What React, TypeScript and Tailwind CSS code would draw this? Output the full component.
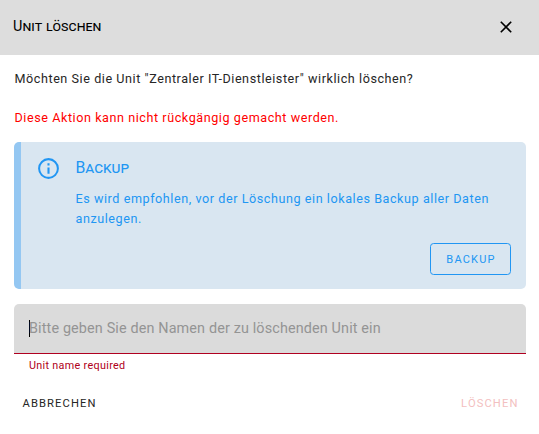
export default function App() {
  return (
    <div className="h-[434px] w-[539px] overflow-hidden bg-white font-[Roboto,sans-serif] text-[12.6px] leading-5 text-[#262626]">
      <header className="flex h-[55px] items-center justify-between bg-[#dddddd] pr-[26px] pb-px pl-[13px]">
        <h1 className="text-[14.4px] font-normal tracking-[0.06px] text-black [font-variant:small-caps]">Unit löschen</h1>
        <button aria-label="Schließen">
          <svg width="14" height="14" viewBox="0 0 14 14" fill="none" stroke="#000" strokeWidth="1.6"><path d="M1.8 1.8l10.4 10.4M12.2 1.8L1.8 12.2" /></svg>
        </button>
      </header>
      <main className="pt-[14px] pr-[13px] pl-[14px]">
        <p className="pl-[0.5px] tracking-[0.56px]">Möchten Sie die Unit "Zentraler IT-Dienstleister" wirklich löschen?</p>
        <p className="mt-[19px] pl-[0.5px] tracking-[0.56px] text-[#ff0000]">Diese Aktion kann nicht rückgängig gemacht werden.</p>
        <section className="mt-[14px] flex h-[147px] rounded-[5px] border-l-[7px] border-[#94c7f2] bg-[#d9e6f1] text-[#2196f3]">
          <svg className="mt-[14px] ml-[15px] shrink-0" width="25" height="25" viewBox="0 0 24 24" fill="currentColor"><path d="M11 9h2V7h-2m1 13c-4.41 0-8-3.59-8-8s3.59-8 8-8 8 3.59 8 8-3.59 8-8 8m0-18A10 10 0 0 0 2 12a10 10 0 0 0 10 10 10 10 0 0 0 10-10A10 10 0 0 0 12 2m-1 15h2v-6h-2v6z" /></svg>
          <div className="flex grow flex-col pt-[15px] pr-[15px] pl-[14px]">
            <h2 className="pl-[0.5px] text-[15.8px] leading-[22px] font-normal [font-variant:small-caps]">Backup</h2>
            <p className="mt-[10px] pl-[0.5px] tracking-[0.56px]">Es wird empfohlen, vor der Löschung ein lokales Backup aller Daten<br />anzulegen.</p>
            <button className="mt-[14px] h-8 w-[81px] self-end rounded-[3.6px] border border-[#2196f3] pt-px pl-px text-[11px] tracking-[1.2px]">BACKUP</button>
          </div>
        </section>
        <div className="mt-[15px] flex h-[50px] items-center rounded-t-[5px] border-b border-[#b00020] bg-[#dbdbdb] pl-[15px]">
          <span className="-mr-px h-[17px] w-px bg-black" />
          <span className="text-[14.4px] tracking-[0.135px] text-[#949494]">Bitte geben Sie den Namen der zu löschenden Unit ein</span>
        </div>
        <p className="mt-[5px] ml-[15px] text-[10.8px] leading-[14px] tracking-[0.31px] text-[#b00020]">Unit name required</p>
      </main>
      <footer className="mt-[21px] flex justify-between pr-[20.5px] pl-[22.5px] text-[11.2px] tracking-[1.11px]">
        <button>ABBRECHEN</button>
        <button className="text-[#f3c0c0]">LÖSCHEN</button>
      </footer>
    </div>
  );
}
